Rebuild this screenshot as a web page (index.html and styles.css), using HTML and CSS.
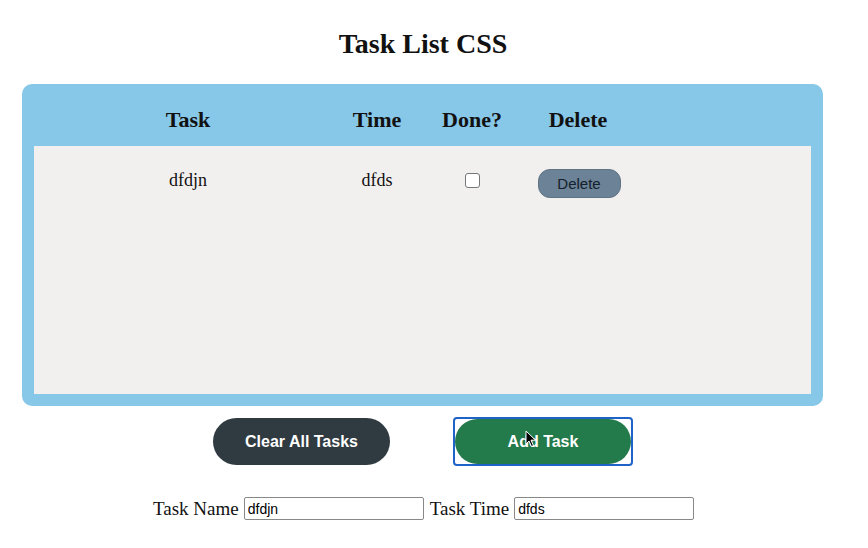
FILE: index.html
```html
<!DOCTYPE html>
<html>
<head>
<meta charset="utf-8">
<link rel="stylesheet" href="styles.css">
</head>
<body>
<h1 class="title">Task List CSS</h1>
<div class="board">
  <div class="grid head">
    <div class="c">Task</div>
    <div class="c">Time</div>
    <div class="c">Done?</div>
    <div class="c">Delete</div>
  </div>
  <div class="panel">
    <div class="grid row">
      <div class="c">dfdjn</div>
      <div class="c">dfds</div>
      <div class="c"><span class="check"></span></div>
      <div class="c"><button class="del">Delete</button></div>
    </div>
  </div>
</div>
<div class="actions">
  <button class="btn clear">Clear All Tasks</button>
  <div class="focus">
    <button class="btn add">Add Task</button>
    <svg class="cursor" width="12" height="18" viewBox="0 0 12 18"><path d="M1 1 L1 14 L4 11 L6.5 16.5 L8.5 15.6 L6 10.2 L10.5 10.2 Z" fill="#000" stroke="#fff" stroke-width="1"/></svg>
  </div>
</div>
<div class="form">
  <label>Task Name</label><input class="inp" value="dfdjn">
  <label>Task Time</label><input class="inp" value="dfds">
</div>
</body>
</html>
```
FILE: styles.css
```css
html, body { margin: 0; padding: 0; background: #fff; }
body { font-family: "Liberation Serif", "Times New Roman", serif; color: #111; width: 846px; }
.title { margin: 0; padding-top: 28px; height: 84px; box-sizing: border-box; text-align: center; font-size: 28px; line-height: 32px; font-weight: bold; }
.board { margin-left: 22px; width: 801px; background: #87c7e7; border-radius: 10px; padding: 0 12px 12px; box-sizing: border-box; }
.grid { display: grid; grid-template-columns: 308px 70px 120px 92px 1fr; }
.c { text-align: center; }
.head { height: 62px; align-items: center; font-weight: bold; font-size: 22px; padding-top: 10px; box-sizing: border-box; }
.panel { background: #f2f0ef; height: 248px; }
.row { padding-top: 23px; font-size: 18px; line-height: 22px; }
.check { display: inline-block; width: 13px; height: 13px; border: 1px solid #777; border-radius: 3px; background: #fff; margin-top: 4px; }
.del { width: 83px; height: 29px; margin-left: 2px; margin-top: 0; border: 1px solid #5e7384; border-radius: 12px; background: #6b8297; font-family: "Liberation Sans", Arial, sans-serif; font-size: 15px; color: #14202b; padding: 0; }
.actions { display: flex; align-items: center; padding-left: 213px; margin-top: 11px; height: 49px; }
.btn { border: none; color: #fff; font-family: "Liberation Sans", Arial, sans-serif; font-weight: bold; font-size: 16px; padding: 0; }
.clear { width: 177px; height: 47px; border-radius: 24px; background: #2f3a41; }
.focus { position: relative; margin-left: 63px; width: 180px; height: 49px; box-sizing: border-box; border: 2px solid #1f63c9; border-radius: 4px; background: #fff; }
.add { display: block; width: 176px; height: 45px; border-radius: 23px; background: #237a4b; }
.cursor { position: absolute; left: 70px; top: 11px; }
.form { display: flex; align-items: center; padding-left: 153px; margin-top: 31px; font-size: 19px; }
.form label { margin-right: 5px; }
.inp { width: 180px; height: 23px; box-sizing: border-box; border: 1px solid #888; border-radius: 2px; font-family: "Liberation Sans", Arial, sans-serif; font-size: 14px; padding: 1px 3px; margin-right: 6px; background: #fff; }
```
